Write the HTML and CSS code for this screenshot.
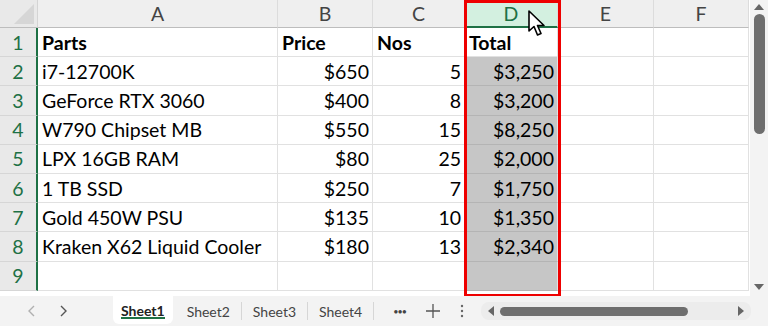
FILE: index.html
```html
<!DOCTYPE html>
<html lang="en">
<head>
  <meta charset="UTF-8">
  <title>Parts Sheet</title>
  <link rel="stylesheet" href="styles.css">
</head>
<body>
  <div class="window">
    <div class="main">
      <div class="sheet">
        <div class="grid">
          <div class="corner"><span class="tri"></span></div>
          <div class="col-head">A</div>
          <div class="col-head">B</div>
          <div class="col-head">C</div>
          <div class="col-head sel">D</div>
          <div class="col-head">E</div>
          <div class="col-head">F</div>

          <div class="row-head">1</div>
          <div class="cell bold">Parts</div>
          <div class="cell bold">Price</div>
          <div class="cell bold">Nos</div>
          <div class="cell bold white">Total</div>
          <div class="cell"></div>
          <div class="cell"></div>

          <div class="row-head">2</div>
          <div class="cell">i7-12700K</div>
          <div class="cell num">$650</div>
          <div class="cell num">5</div>
          <div class="cell num shade">$3,250</div>
          <div class="cell"></div>
          <div class="cell"></div>

          <div class="row-head">3</div>
          <div class="cell">GeForce RTX 3060</div>
          <div class="cell num">$400</div>
          <div class="cell num">8</div>
          <div class="cell num shade">$3,200</div>
          <div class="cell"></div>
          <div class="cell"></div>

          <div class="row-head">4</div>
          <div class="cell">W790 Chipset MB</div>
          <div class="cell num">$550</div>
          <div class="cell num">15</div>
          <div class="cell num shade">$8,250</div>
          <div class="cell"></div>
          <div class="cell"></div>

          <div class="row-head">5</div>
          <div class="cell">LPX 16GB RAM</div>
          <div class="cell num">$80</div>
          <div class="cell num">25</div>
          <div class="cell num shade">$2,000</div>
          <div class="cell"></div>
          <div class="cell"></div>

          <div class="row-head">6</div>
          <div class="cell">1 TB SSD</div>
          <div class="cell num">$250</div>
          <div class="cell num">7</div>
          <div class="cell num shade">$1,750</div>
          <div class="cell"></div>
          <div class="cell"></div>

          <div class="row-head">7</div>
          <div class="cell">Gold 450W PSU</div>
          <div class="cell num">$135</div>
          <div class="cell num">10</div>
          <div class="cell num shade">$1,350</div>
          <div class="cell"></div>
          <div class="cell"></div>

          <div class="row-head">8</div>
          <div class="cell">Kraken X62 Liquid Cooler</div>
          <div class="cell num">$180</div>
          <div class="cell num">13</div>
          <div class="cell num shade">$2,340</div>
          <div class="cell"></div>
          <div class="cell"></div>

          <div class="row-head">9</div>
          <div class="cell"></div>
          <div class="cell"></div>
          <div class="cell"></div>
          <div class="cell shade"></div>
          <div class="cell"></div>
          <div class="cell"></div>
        </div>

        <div class="highlight"></div>
        <svg class="cursor" width="20" height="28" viewBox="0 0 20 28">
          <path d="M2 1 L2 21 L7 16.5 L10.5 25 L14 23.5 L10.5 15.5 L17 15.5 Z" fill="#fff" stroke="#000" stroke-width="1.6" stroke-linejoin="round"/>
        </svg>
      </div>

      <div class="vscroll">
        <span class="arrow-up"></span>
        <span class="vthumb"></span>
        <span class="vspace"></span>
        <span class="arrow-down"></span>
      </div>
    </div>

    <div class="tabbar">
      <div class="nav">
        <svg width="10" height="14" viewBox="0 0 10 14"><path d="M7 2 L2 7 L7 12" fill="none" stroke="#b0b0b0" stroke-width="1.4"/></svg>
        <svg width="10" height="14" viewBox="0 0 10 14"><path d="M3 2 L8 7 L3 12" fill="none" stroke="#555" stroke-width="1.4"/></svg>
      </div>
      <div class="tab active">Sheet1</div>
      <div class="tab">Sheet2</div>
      <div class="tab">Sheet3</div>
      <div class="tab last">Sheet4</div>
      <div class="tools">
        <span class="dots">&bull;&bull;&bull;</span>
        <svg width="14" height="14" viewBox="0 0 14 14"><path d="M7 0 V14 M0 7 H14" stroke="#555" stroke-width="1.3"/></svg>
        <svg width="4" height="14" viewBox="0 0 4 14"><circle cx="2" cy="2" r="1.2" fill="#666"/><circle cx="2" cy="7" r="1.2" fill="#666"/><circle cx="2" cy="12" r="1.2" fill="#666"/></svg>
      </div>
      <div class="hscroll">
        <span class="arrow-left"></span>
        <span class="hthumb"></span>
        <span class="arrow-right"></span>
      </div>
    </div>
  </div>
</body>
</html>
```

FILE: styles.css
```css
body {
  margin: 0;
  font-family: Lato, "Open Sans", sans-serif;
  background-color: #f3f3f3;
  overflow: hidden;
}

.window {
  width: 768px;
  height: 326px;
  display: flex;
  flex-direction: column;
}

.main {
  display: flex;
  height: 296px;
}

.sheet {
  position: relative;
  width: 750px;
  height: 296px;
  overflow: hidden;
  background-color: #fff;
}

.grid {
  display: grid;
  grid-template-columns: 38px 240px 95px 92px 93px 96px 95px;
  grid-template-rows: 28px repeat(9, 29.2px) 8px;
}

.corner {
  background-color: #e9e9e9;
  border-right: 1px solid #d4d4d4;
  border-bottom: 1px solid #bdbdbd;
  position: relative;
}

.corner .tri {
  position: absolute;
  right: 3px;
  bottom: 3px;
  width: 0;
  height: 0;
  border-left: 20px solid transparent;
  border-bottom: 20px solid #d6d6d6;
}

.col-head {
  background-color: #efefef;
  border-right: 1px solid #dcdcdc;
  border-bottom: 1px solid #bdbdbd;
  color: #444;
  font-size: 19.5px;
  display: flex;
  align-items: center;
  justify-content: center;
}

.col-head.sel {
  background-color: #d3f0e0;
  color: #1e7145;
  border-bottom: 2px solid #1e7145;
}

.row-head {
  background-color: #e9e9e9;
  border-right: 2px solid #1e7145;
  border-bottom: 1px solid #d6d6d6;
  color: #1e7145;
  font-size: 19.5px;
  display: flex;
  align-items: center;
  justify-content: center;
}

.cell {
  border-right: 1px solid #e1e1e1;
  border-bottom: 1px solid #e1e1e1;
  font-size: 19.5px;
  color: #000;
  padding: 0 3px 0 4px;
  display: flex;
  align-items: center;
  white-space: nowrap;
}

.bold {
  font-weight: bold;
}

.num {
  justify-content: flex-end;
}

.shade {
  background-color: #c6c6c6;
  border-bottom-color: #b4b4b4;
}

.highlight {
  position: absolute;
  left: 464px;
  top: 0;
  width: 91px;
  height: 291px;
  border: 3px solid #ee0000;
}

.cursor {
  position: absolute;
  left: 527px;
  top: 10px;
}

.vscroll {
  width: 18px;
  background-color: #f3f3f3;
  display: flex;
  flex-direction: column;
  align-items: center;
  padding: 4px 0;
}

.arrow-up {
  width: 0;
  height: 0;
  border-left: 5px solid transparent;
  border-right: 5px solid transparent;
  border-bottom: 6px solid #666;
  margin-bottom: 4px;
}

.vthumb {
  width: 11px;
  height: 120px;
  border-radius: 6px;
  background-color: #6e6e6e;
}

.vspace {
  flex: 1;
}

.arrow-down {
  width: 0;
  height: 0;
  border-left: 5px solid transparent;
  border-right: 5px solid transparent;
  border-top: 6px solid #666;
  margin-bottom: 2px;
}

.tabbar {
  display: flex;
  align-items: stretch;
  height: 30px;
  font-size: 14px;
  color: #444;
}

.nav {
  display: flex;
  align-items: center;
  gap: 21px;
  padding-left: 27px;
  width: 86px;
}

.tab {
  display: flex;
  align-items: center;
  padding: 0 11px;
  border-right: 1px solid #d6d6d6;
  margin: 6px 0;
}

.tab.active {
  background-color: #fff;
  margin: 0 3px 2px 0;
  padding: 0 8px;
  border-right: none;
  border-radius: 0 0 6px 6px;
  font-weight: bold;
  color: #222;
  position: relative;
}

.tab.active::after {
  content: "";
  position: absolute;
  left: 8px;
  right: 8px;
  bottom: 5px;
  height: 2px;
  background-color: #1e7145;
}

.tab.last {
  border-right: 1px solid #d6d6d6;
}

.tools {
  display: flex;
  align-items: center;
  gap: 20px;
  padding-left: 19px;
  width: 88px;
}

.dots {
  font-size: 9px;
  letter-spacing: -1px;
  color: #444;
}

.hscroll {
  display: flex;
  align-items: center;
  gap: 6px;
  background-color: #ececec;
  border-radius: 8px;
  margin: 6px 0;
  padding: 0 7px;
  width: 256px;
}

.arrow-left {
  width: 0;
  height: 0;
  border-top: 5px solid transparent;
  border-bottom: 5px solid transparent;
  border-right: 6px solid #666;
}

.hthumb {
  width: 188px;
  height: 9px;
  border-radius: 5px;
  background-color: #6e6e6e;
}

.arrow-right {
  width: 0;
  height: 0;
  border-top: 5px solid transparent;
  border-bottom: 5px solid transparent;
  border-left: 6px solid #666;
  margin-left: auto;
}
```
